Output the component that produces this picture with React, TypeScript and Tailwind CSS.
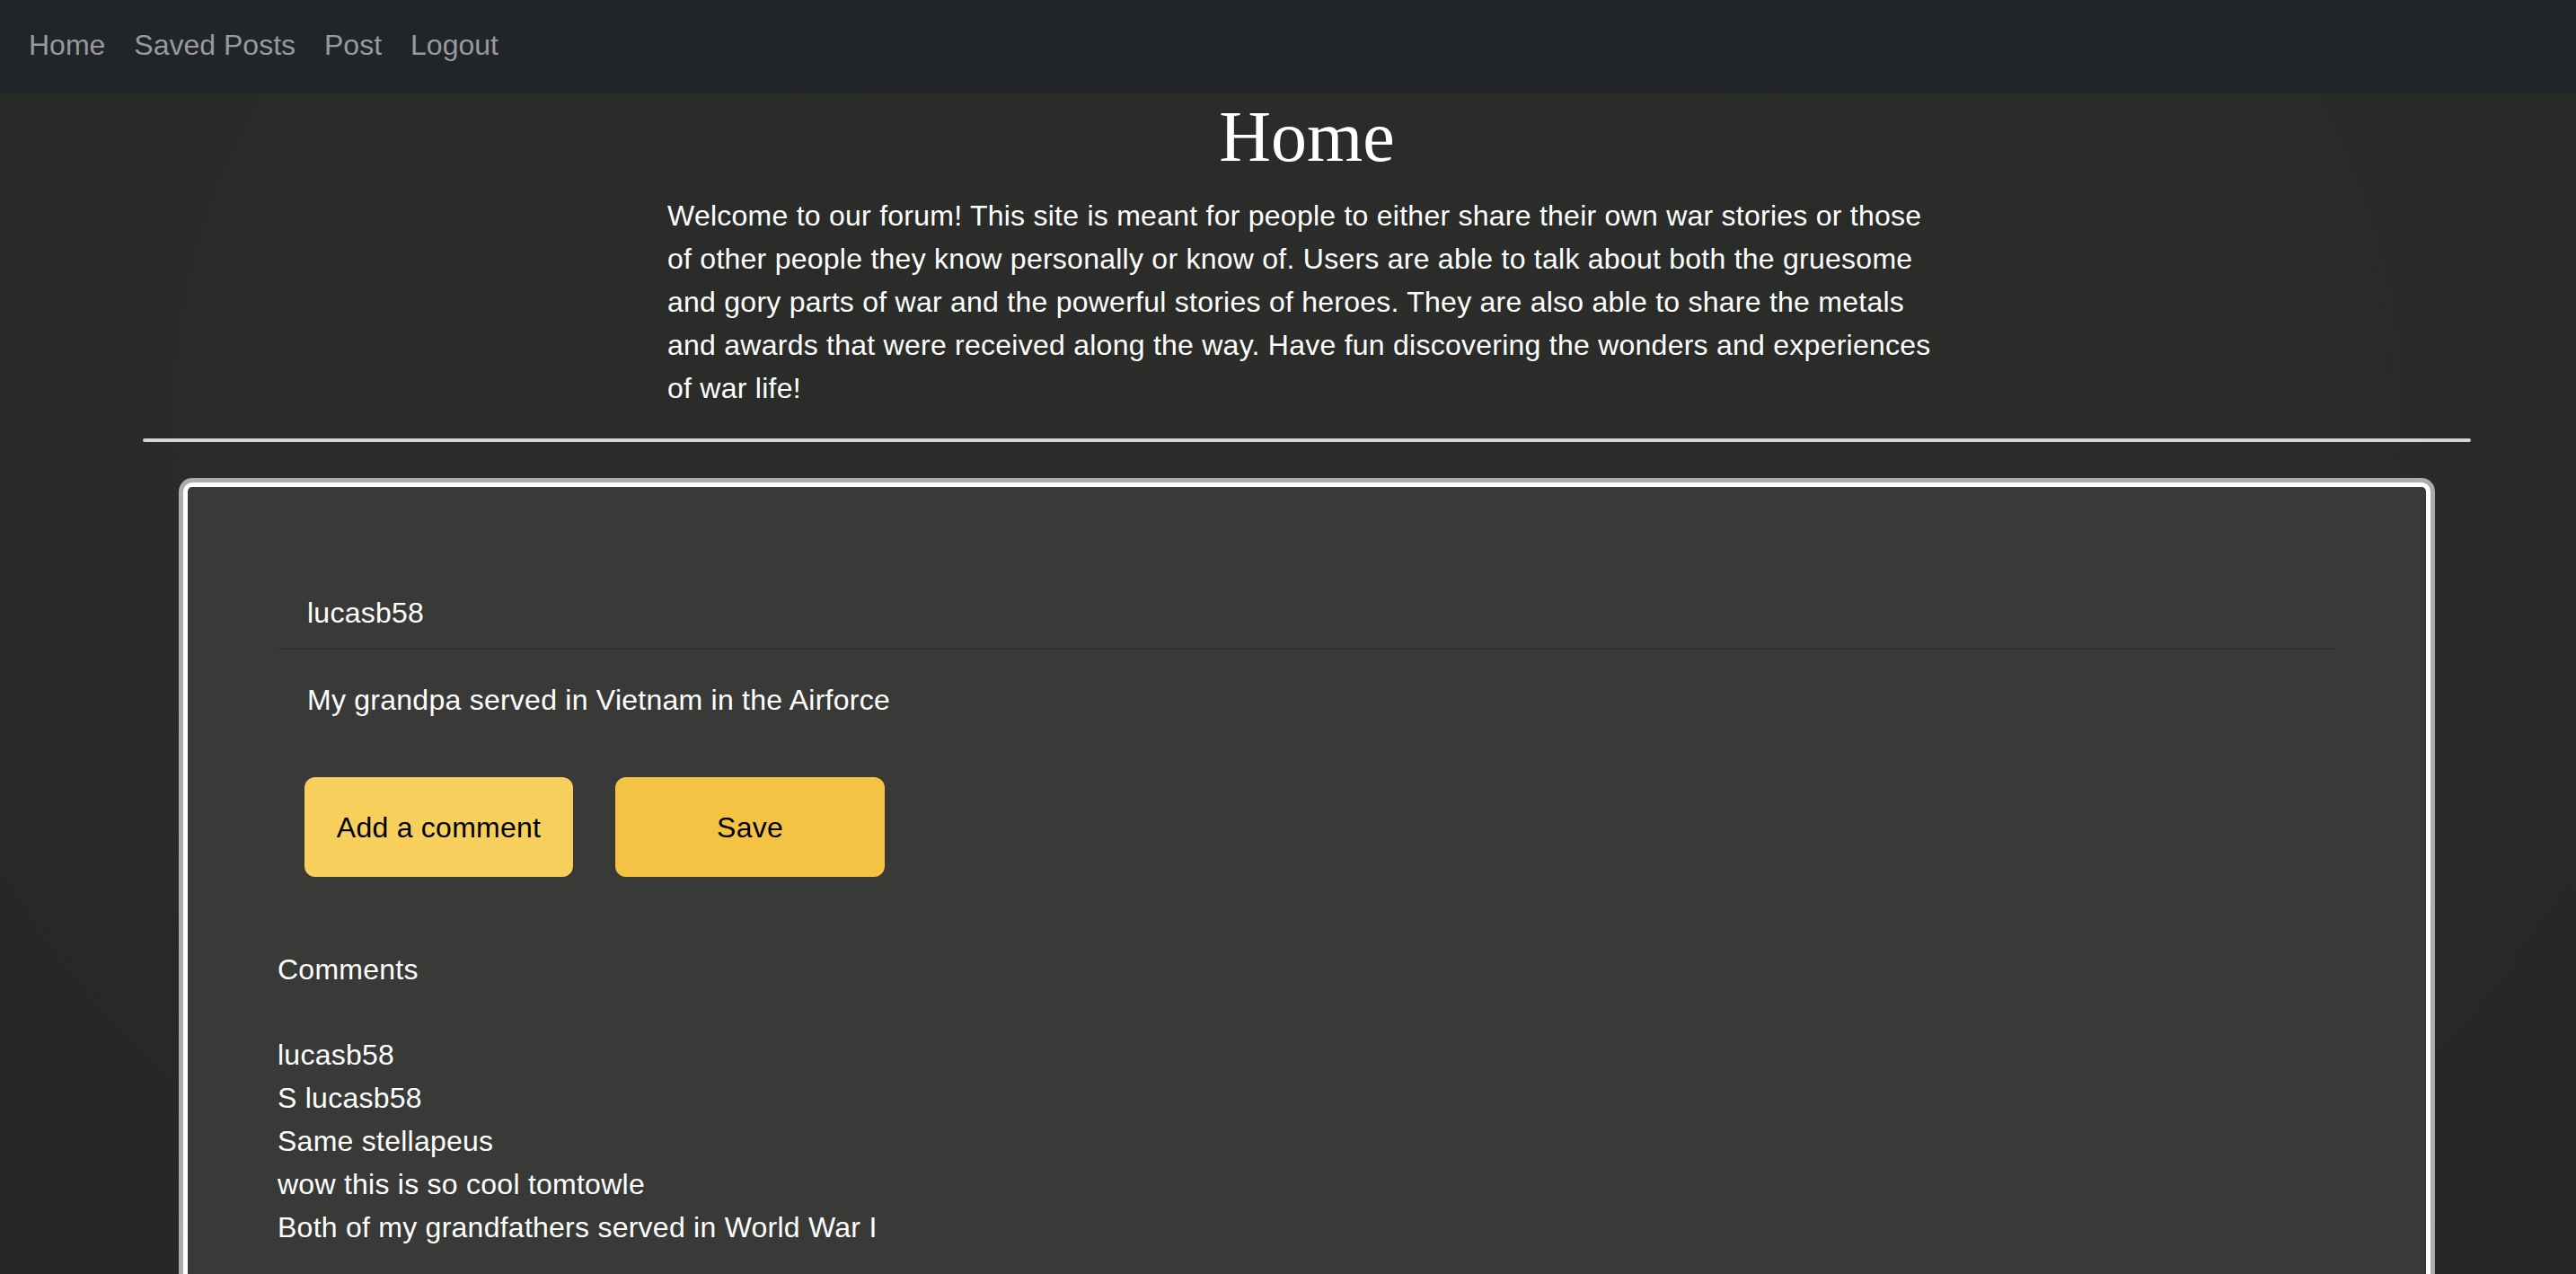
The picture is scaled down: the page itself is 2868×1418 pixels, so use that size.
const navLinks = ['Home', 'Saved Posts', 'Post', 'Logout'];

const comments = [
  'lucasb58',
  'S lucasb58',
  'Same stellapeus',
  'wow this is so cool tomtowle',
  'Both of my grandfathers served in World War I',
];

function Navbar() {
  return (
    <nav className="h-[104px] bg-[#212529] flex items-center pl-[32px] pb-[5px] gap-[32px] tracking-normal">
      {navLinks.map((link) => (
        <a key={link} href="#" className="text-[32px] leading-[48px] text-[#989a9d]">
          {link}
        </a>
      ))}
    </nav>
  );
}

function PostCard() {
  return (
    <div className="border border-[#3c3d3a] rounded-[12px]">
      <div className="px-[32px] py-[15px] border-b-2 border-[#2e302d] text-[32px] leading-[48px] text-white">
        lucasb58
      </div>
      <div className="p-[32px]">
        <p className="text-[32px] leading-[48px] text-white">My grandpa served in Vietnam in the Airforce</p>
        <div className="flex gap-[47px] mt-[62px] -ml-[3px]">
          <button className="w-[299px] h-[111px] rounded-[12px] bg-[#f7cf5c] text-black text-[32px]">
            Add a comment
          </button>
          <button className="w-[300px] h-[111px] rounded-[12px] bg-[#f5c344] text-black text-[32px]">
            Save
          </button>
        </div>
      </div>
    </div>
  );
}

export default function App() {
  return (
    <div className="min-h-screen bg-[radial-gradient(ellipse_at_50%_30%,#2c2d2a_0%,#292b28_60%,#242522_100%)] font-['Liberation_Sans',Arial,sans-serif] tracking-[0.25px]">
      <Navbar />
      <main className="pl-[42px] pb-[60px]">
        <h1 className="text-center font-['Liberation_Serif','Times_New_Roman',serif] text-[80px] leading-[96px] text-white tracking-normal mb-[16px]">
          Home
        </h1>
        <p className="w-[1424px] mx-auto text-[32px] leading-[48px] text-white mb-[32px]">
          Welcome to our forum! This site is meant for people to either share their own war stories or those of
          other people they know personally or know of. Users are able to talk about both the gruesome and gory
          parts of war and the powerful stories of heroes. They are also able to share the metals and awards that
          were received along the way. Have fun discovering the wonders and experiences of war life!
        </p>
        <hr className="mx-[117px] h-[4px] bg-[#d4d4d4] border-0 rounded-full" />

        <div className="mx-[162px] mt-[45px] border-[5px] border-white rounded-[10px] shadow-[0_0_0_5px_#acacac] bg-[#393a37] p-[100px]">
          <PostCard />
          <div className="mt-[46px] text-[32px] leading-[48px] text-white">
            <p className="mb-[47px]">Comments</p>
            {comments.map((c, i) => (
              <p key={i}>{c}</p>
            ))}
          </div>
        </div>
      </main>
    </div>
  );
}
